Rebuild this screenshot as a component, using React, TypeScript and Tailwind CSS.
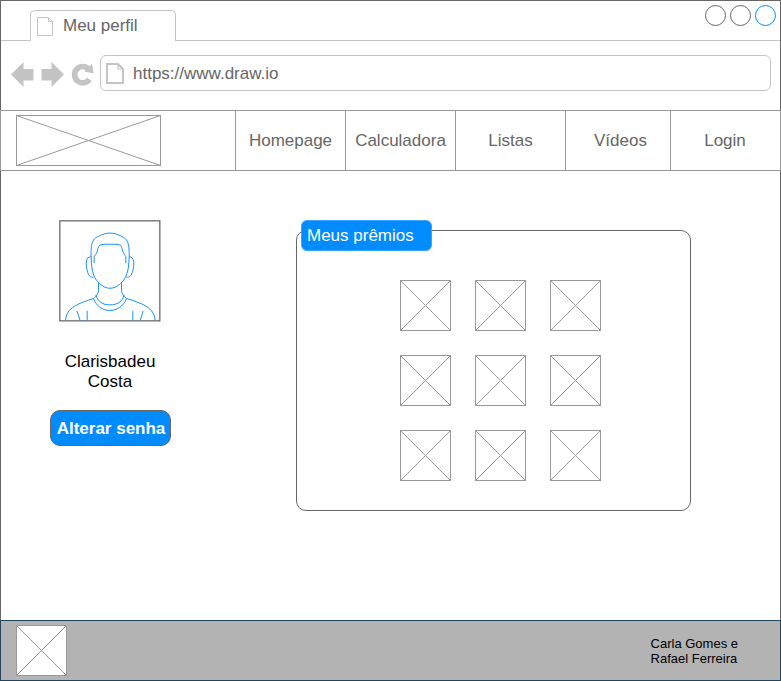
const pages = [
  { label: "Homepage", cell: "w-[110px]" },
  { label: "Calculadora", cell: "w-[110px]" },
  { label: "Listas", cell: "w-[110px]" },
  { label: "Vídeos", cell: "w-[105px] pl-[5px]" },
  { label: "Login", cell: "w-[110px] pr-px" },
];

function Placeholder({ width, height }: { width: number; height: number }) {
  return (
    <svg width={width} height={height} className="block shrink-0" fill="none" stroke="#999999">
      <rect x="0.5" y="0.5" width={width - 1} height={height - 1} fill="#ffffff" />
      <path d={`M0.5 0.5L${width - 0.5} ${height - 0.5}M0.5 ${height - 0.5}L${width - 0.5} 0.5`} />
    </svg>
  );
}

function PageIcon({ bold = false }: { bold?: boolean }) {
  return bold ? (
    <svg width="18" height="21" className="shrink-0" fill="none" stroke="#c4c4c4" strokeWidth="2">
      <path d="M1 1H12L17 6V20H1Z" />
      <path d="M12 1V6H17" strokeWidth="1.2" />
    </svg>
  ) : (
    <svg width="17" height="20" className="shrink-0" fill="none" stroke="#c4c4c4">
      <path d="M0.5 0.5H11.5L15.5 4.5V18.5H0.5Z" />
      <path d="M11.5 0.5V4.5H15.5" />
    </svg>
  );
}

function Avatar() {
  return (
    <svg width="102" height="102" viewBox="28.5 28.5 306 306" className="block" fill="none" strokeWidth="3">
      <rect x="31" y="31" width="300" height="300" stroke="#666666" strokeWidth="3.8" />
      <g stroke="#1a90f5">
        <path d="M125 141C123 95 130 84 150 76C171 65 192 65 213 76C234 84 240 95 239 141" />
        <path d="M125 141C126 190 136 206 150 219C170 238 193 238 213 219C229 205 238 185 239 141" />
        <path d="M134 158V138C148 122 142 112 151 104Q155 101 181 101Q208 101 213 104C220 112 216 122 229 138V158" />
        <path d="M124 139C108 139 108 160 113 180C117 197 124 202 132 200" />
        <path d="M239 139C255 139 255 160 250 180C246 197 239 202 231 200" />
        <path d="M147 218V238C146 255 138 256 132 264M216 218V238C217 255 225 256 231 264" />
        <path d="M139 253C146 275 160 283 181 283C203 283 218 275 224 253" />
        <path d="M132 264C150 312 212 312 231 264" />
        <path d="M132 264C90 278 50 290 48 330M231 264C275 278 315 290 317 330" />
        <path d="M82 301L92 330M113 301V330M250 301V330M281 301L272 330" />
      </g>
    </svg>
  );
}

function BrowserBar() {
  return (
    <>
      <div className="flex h-10 shrink-0 items-end border-b border-[#c4c4c4]">
        <div className="-mb-px ml-[29px] flex h-[31px] w-[146px] items-center rounded-t-[5px] border border-b-0 border-[#c4c4c4] bg-white pl-1.5">
          <div className="pt-px">
            <PageIcon />
          </div>
          <span className="ml-[9px]">Meu perfil</span>
        </div>
        <div className="mr-[4px] mb-auto ml-auto flex gap-1 pt-[4px]">
          <span className="size-[21px] rounded-full border border-[#666]" />
          <span className="size-[21px] rounded-full border border-[#666]" />
          <span className="size-[21px] rounded-full border border-[#008cff]" />
        </div>
      </div>
      <div className="flex h-[69px] shrink-0 items-start pt-[14px] pl-[10px]">
        <svg width="84" height="36" className="mr-[5px] shrink-0" fill="#c4c4c4">
          <path d="M0 19.5L12.5 7V14H22.5V25.5H12.5V32Z" />
          <path d="M53 19.5L40.5 7V14H30.5V25.5H40.5V32Z" />
          <path d="M77.6 13.9A8.2 8.2 0 1 0 78.5 24.4" fill="none" stroke="#c4c4c4" strokeWidth="5.6" />
          <path d="M73.3 16.5L82.7 18.4L81 8.8Z" />
        </svg>
        <div className="flex h-9 w-[671px] items-center rounded-[6px] border border-[#c4c4c4] pt-[2px] pl-[5px]">
          <div className="pb-[2px]">
            <PageIcon bold />
          </div>
          <span className="ml-[9px]">https://www.draw.io</span>
        </div>
      </div>
    </>
  );
}

export default function App() {
  return (
    <div className="flex h-[681px] w-[781px] flex-col border border-[#666] bg-white font-['Liberation_Sans',Arial,sans-serif] text-[17px] leading-5 text-[#666]">
      <BrowserBar />
      <nav className="-mx-px flex h-[61px] shrink-0 border border-[#999]">
        <div className="w-[234px] pt-1 pl-[15px]">
          <Placeholder width={145} height={51} />
        </div>
        {pages.map((page) => (
          <a key={page.label} className={`flex items-center justify-center border-l border-[#999] ${page.cell}`}>
            {page.label}
          </a>
        ))}
      </nav>

      <main className="flex h-[449px] shrink-0 items-start">
        <aside className="ml-[49px] flex w-[121px] flex-col items-center pt-[49px] text-center text-black">
          <div className="mr-px">
            <Avatar />
          </div>
          <p className="mt-[30px] mr-px w-[100px]">Clarisbadeu Costa</p>
          <button className="mt-[18px] h-9 w-[121px] rounded-[10px] border border-[#666] bg-[#008cff] pt-px pl-px font-bold whitespace-nowrap text-white">
            Alterar senha
          </button>
        </aside>
        <section className="mt-[59px] ml-[125px] h-[281px] w-[395px] rounded-[10px] border border-[#666]">
          <h2 className="-mt-[11px] ml-1 h-[31px] w-[131px] rounded-[6px] border border-[#3ba6ff] bg-[#008cff] pt-[5px] pl-[5px] text-white">
            Meus prêmios
          </h2>
          <div className="mt-[29px] ml-[103px] grid w-[201px] grid-cols-3 gap-6">
            {Array.from({ length: 9 }, (_, i) => (
              <Placeholder key={i} width={51} height={51} />
            ))}
          </div>
        </section>
      </main>

      <footer className="-mx-px flex h-[61px] shrink-0 items-start justify-between border border-[#23445d] bg-[#b3b3b3] pt-1 pr-[42px] pl-[15px]">
        <Placeholder width={51} height={51} />
        <p className="mt-[11px] text-[13px] leading-[15px] text-black">
          Carla Gomes e
          <br />
          Rafael Ferreira
        </p>
      </footer>
    </div>
  );
}
